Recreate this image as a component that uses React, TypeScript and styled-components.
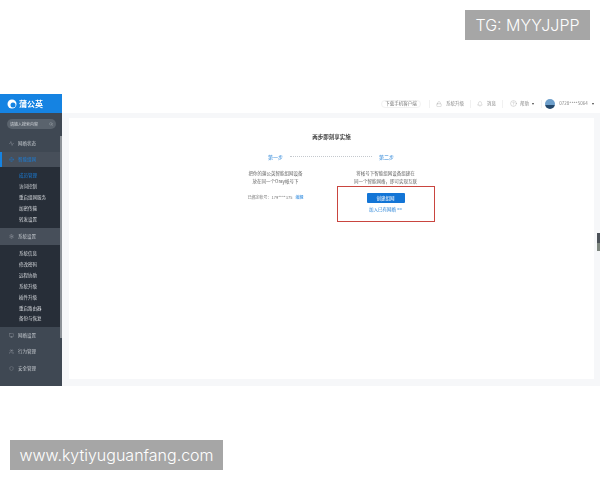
import React from "react";
import styled, { createGlobalStyle } from "styled-components";
import { Search, Activity, Globe, Settings, Monitor, Users, Shield, Bell, CircleHelp, Lock } from "lucide-react";

const Global = createGlobalStyle`
  html, body { margin: 0; padding: 0; background: #fff; }
  #root { width: 600px; height: 480px; overflow: hidden; }
  * { box-sizing: border-box; }
`;

const FONT = `"Noto Sans CJK SC", "Liberation Sans", sans-serif`;

const Page = styled.div`
  position: relative;
  width: 600px;
  height: 480px;
  padding-top: 94px;
  font-family: ${FONT};
  overflow: hidden;
`;

const Shot = styled.div`
  display: flex;
  width: 600px;
  height: 292px;
  filter: blur(0.5px);
`;

const Sidebar = styled.aside`
  position: relative;
  flex: 0 0 62px;
  display: flex;
  flex-direction: column;
  background: #3f4853;
`;

const Logo = styled.div`
  flex: 0 0 19px;
  background: #1583e2;
  display: flex;
  align-items: center;
  gap: 2px;
  padding-left: 7px;
  color: #fff;
  font-size: 8px;
  font-weight: 700;
  line-height: 1;
`;

const LogoMark = styled.svg`
  width: 10px;
  height: 10px;
`;

const SearchBox = styled.div`
  margin: 6px 6px 6px 7px;
  flex: 0 0 10px;
  border-radius: 5px;
  background: #5a636d;
  display: flex;
  align-items: center;
  justify-content: space-between;
  padding: 0 3px;
  color: #cfd3d8;
  font-size: 4px;
  line-height: 1;
`;

const MenuRow = styled.div<{ $h: number; $active?: boolean; $open?: boolean }>`
  flex: 0 0 ${(p) => p.$h}px;
  display: flex;
  align-items: center;
  gap: 4px;
  font-size: 4.5px;
  line-height: 1;
  color: ${(p) => (p.$active ? "#1a7fdc" : "#c3c8cd")};
  background: ${(p) => (p.$active || p.$open ? "#474f5a" : "transparent")};
  border-left: ${(p) => (p.$active ? "2px solid #1583e2" : "0")};
  padding-left: ${(p) => (p.$active ? "7px" : "9px")};
`;

const SubMenu = styled.div<{ $h: number }>`
  flex: 0 0 ${(p) => p.$h}px;
  background: #272e38;
  display: flex;
  flex-direction: column;
  justify-content: center;
`;

const SubItem = styled.div<{ $active?: boolean }>`
  height: 10.9px;
  display: flex;
  align-items: center;
  padding-left: 19px;
  font-size: 4.5px;
  line-height: 1;
  color: ${(p) => (p.$active ? "#1a7fdc" : "#d5d8dc")};
`;

const ScrollThumb = styled.div`
  position: absolute;
  right: 0;
  top: 42px;
  width: 2px;
  height: 202px;
  background: #8d9298;
`;

const Right = styled.div`
  flex: 1;
  display: flex;
  flex-direction: column;
  min-width: 0;
`;

const Header = styled.header`
  flex: 0 0 19px;
  display: flex;
  align-items: center;
  justify-content: flex-end;
  padding-right: 3px;
  background: #fff;
  color: #8a8a8a;
  font-size: 4.5px;
  line-height: 1;
`;

const Pill = styled.div`
  width: 40px;
  height: 8px;
  margin-right: 8px;
  border: 1px solid #f2f2f2;
  border-radius: 4px;
  display: flex;
  align-items: center;
  justify-content: center;
  color: #777;
`;

const HeadItem = styled.div<{ $w: number; $gap?: number }>`
  width: ${(p) => p.$w}px;
  height: 8px;
  display: flex;
  align-items: center;
  justify-content: center;
  gap: ${(p) => p.$gap ?? 3}px;
  border-left: 1px solid #f1f1f1;
`;

const Caret = styled.span`
  width: 0;
  height: 0;
  border-left: 1.5px solid transparent;
  border-right: 1.5px solid transparent;
  border-top: 2px solid #444;
`;

const Avatar = styled.span`
  width: 10px;
  height: 10px;
  border-radius: 50%;
  background: linear-gradient(#6d9fcb 55%, #24486b 60%);
`;

const Main = styled.main`
  flex: 1;
  background: #f6f7f9;
  padding: 5px 6px 7px 7px;
  display: flex;
`;

const Card = styled.section`
  flex: 1;
  background: #fff;
  display: flex;
  flex-direction: column;
  align-items: center;
  padding-top: 14px;
`;

const Title = styled.h1`
  margin: 0 0 9px;
  font-size: 5.5px;
  line-height: 10px;
  font-weight: 700;
  color: #444;
`;

const Steps = styled.div`
  display: flex;
  align-items: center;
  gap: 7px;
  height: 10px;
  margin: 0 0 1px -1px;
`;

const StepLabel = styled.span`
  font-size: 5px;
  line-height: 1;
  color: #2b85d8;
`;

const Dots = styled.span`
  width: 82px;
  border-top: 1px dotted #c4c8cd;
`;

const Columns = styled.div`
  display: flex;
  width: 194px;
  margin-left: 12px;
  justify-content: space-between;
  align-items: flex-start;
`;

const Col = styled.div<{ $w: number }>`
  width: ${(p) => p.$w}px;
  display: flex;
  flex-direction: column;
  align-items: center;
  padding-top: 7px;
`;

const Desc = styled.p`
  margin: 0;
  font-size: 4.5px;
  line-height: 8px;
  text-align: center;
  white-space: nowrap;
  color: #666;
`;

const Account = styled.p`
  margin: 9px 0 0;
  font-size: 4px;
  line-height: 6px;
  white-space: nowrap;
  color: #777;
`;

const Edit = styled.span`
  color: #1a7fdc;
  margin-left: 3px;
`;

const RedBox = styled.div`
  width: 98px;
  height: 36px;
  margin-top: 1px;
  border: 1px solid #c9453f;
  display: flex;
  flex-direction: column;
  align-items: center;
  padding-top: 6px;
`;

const Primary = styled.button`
  width: 38px;
  height: 10px;
  padding: 0;
  border: 0;
  border-radius: 1px;
  background: #1375d6;
  color: #fff;
  font-family: inherit;
  font-size: 4.5px;
  line-height: 1;
`;

const JoinLink = styled.a`
  margin-top: 3px;
  font-size: 4.5px;
  line-height: 6px;
  color: #2b85d8;
`;

const SideTab = styled.div`
  position: absolute;
  left: 597px;
  top: 233px;
  width: 3px;
  height: 18px;
  background: linear-gradient(#4c5258 55%, #7d857e 55%);
`;

const Watermark = styled.div`
  position: absolute;
  background: #a6a6a6;
  color: #fff;
  height: 30px;
  display: flex;
  align-items: center;
  justify-content: center;
  font-family: "Inter", "Liberation Sans", sans-serif;
  font-weight: 300;
  font-size: 16px;
  line-height: 1;
  white-space: nowrap;
`;

const TopMark = styled(Watermark)`
  left: 465px;
  top: 10px;
  width: 125px;
`;

const BottomMark = styled(Watermark)`
  left: 10px;
  top: 440px;
  width: 213px;
`;

const ic = { size: 5, strokeWidth: 1.2 };

export default function App() {
  return (
    <Page>
      <Global />
      <Shot>
        <Sidebar>
          <Logo>
            <LogoMark viewBox="0 0 20 20">
              <circle cx="10" cy="10" r="9" fill="#fff" />
              <circle cx="12" cy="12" r="5" fill="#1583e2" />
            </LogoMark>
            蒲公英
          </Logo>
          <SearchBox>
            请输入搜索内容
            <Search size={4} strokeWidth={1.5} />
          </SearchBox>
          <MenuRow $h={17}><Activity {...ic} />网络状态</MenuRow>
          <MenuRow $h={15} $active><Globe {...ic} />智能组网</MenuRow>
          <SubMenu $h={61}>
            <SubItem $active>成员管理</SubItem>
            <SubItem>访问控制</SubItem>
            <SubItem>重启组网服务</SubItem>
            <SubItem>加密传输</SubItem>
            <SubItem>转发设置</SubItem>
          </SubMenu>
          <MenuRow $h={17} $open><Settings {...ic} />系统设置</MenuRow>
          <SubMenu $h={82}>
            <SubItem>系统信息</SubItem>
            <SubItem>修改密码</SubItem>
            <SubItem>远程协助</SubItem>
            <SubItem>系统升级</SubItem>
            <SubItem>插件升级</SubItem>
            <SubItem>重启路由器</SubItem>
            <SubItem>备份与恢复</SubItem>
          </SubMenu>
          <MenuRow $h={16}><Monitor {...ic} />网络设置</MenuRow>
          <MenuRow $h={17}><Users {...ic} />行为管理</MenuRow>
          <MenuRow $h={16}><Shield {...ic} />安全管理</MenuRow>
          <ScrollThumb />
        </Sidebar>
        <Right>
          <Header>
            <Pill>下载手机客户端</Pill>
            <HeadItem $w={41} $gap={4}><Lock size={6} strokeWidth={1} />系统升级</HeadItem>
            <HeadItem $w={32} $gap={4}><Bell size={6} strokeWidth={1} />消息</HeadItem>
            <HeadItem $w={39}><CircleHelp size={7} strokeWidth={1} />帮助<Caret /></HeadItem>
            <HeadItem $w={56} $gap={4}><Avatar />0728****5064<Caret /></HeadItem>
          </Header>
          <Main>
            <Card>
              <Title>两步即刻享实施</Title>
              <Steps>
                <StepLabel>第一步</StepLabel>
                <Dots />
                <StepLabel>第二步</StepLabel>
              </Steps>
              <Columns>
                <Col $w={70}>
                  <Desc>把你的蒲公英智能组网设备<br />放在同一个Oray帐号下</Desc>
                  <Account>已绑定帐号：179****375<Edit>编辑</Edit></Account>
                </Col>
                <Col $w={98}>
                  <Desc>将帐号下智能组网设备组建在<br />同一个智能网络，即可实现互联</Desc>
                  <RedBox>
                    <Primary>创建组网</Primary>
                    <JoinLink>加入已有网络 &gt;&gt;</JoinLink>
                  </RedBox>
                </Col>
              </Columns>
            </Card>
          </Main>
        </Right>
      </Shot>
      <SideTab />
      <TopMark>TG: MYYJJPP</TopMark>
      <BottomMark>www.kytiyuguanfang.com</BottomMark>
    </Page>
  );
}
